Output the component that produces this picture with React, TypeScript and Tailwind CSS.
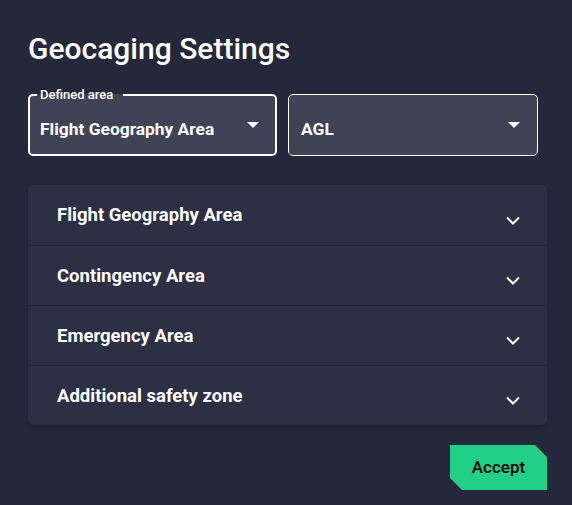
const areas = ['Flight Geography Area', 'Contingency Area', 'Emergency Area', 'Additional safety zone']

function Caret() {
    return (
        <svg width="12" height="6" viewBox="0 0 12 6" className="fill-white">
            <path d="M0 0h12L6 6z" />
        </svg>
    )
}

function Chevron() {
    return (
        <svg width="14" height="9" viewBox="0 0 14 9" fill="none" stroke="white" strokeWidth={2}>
            <path d="M1 1.5l6 6 6-6" />
        </svg>
    )
}

export default function App() {
    return (
        <div className="min-h-[505px] w-[572px] bg-[#25273b] pl-[28px] pr-[25px] pt-[31px] font-['Roboto',sans-serif] text-white">
            <h1 className="text-[30px] font-medium leading-[36px]">Geocaging Settings</h1>

            <div className="mt-[22px] flex h-[67px] items-end gap-[11px]">
                <fieldset className="h-[67px] w-[249px] rounded-[5px] border-2 border-white bg-[#404356] px-0">
                    <legend className="ml-[7px] pl-[3px] pr-[10px] text-[13px] font-medium leading-[12px]">
                        Defined area
                    </legend>
                    <div className="flex h-[53px] items-center justify-between pl-[10px] pr-[16px]">
                        <span className="pt-[3px] text-[17.4px] font-bold">Flight Geography Area</span>
                        <span className="pb-[5px]">
                            <Caret />
                        </span>
                    </div>
                </fieldset>
                <div className="flex h-[62px] w-[250px] items-center justify-between rounded-[5px] border border-white bg-[#404356] pl-[12px] pr-[17px]">
                    <span className="pt-[8px] text-[17.4px] font-bold">AGL</span>
                    <Caret />
                </div>
            </div>

            <div className="mt-[29px] overflow-hidden rounded-[5px] bg-[#2d2f44] shadow-[0_2px_4px_rgba(0,0,0,0.2)]">
                {areas.map((a, i) => (
                    <div
                        key={a}
                        className={
                            'flex h-[60px] items-center justify-between pl-[29px] pr-[27px] ' +
                            (i > 0 ? 'border-t border-[#26283a]' : '')
                        }
                    >
                        <span className="pt-[2px] text-[18.5px] font-bold">{a}</span>
                        <span className="pt-[10px]">
                            <Chevron />
                        </span>
                    </div>
                ))}
            </div>

            <div className="mt-[20px] flex justify-end">
                <button className="h-[45px] w-[97px] bg-[#21cf88] text-[17px] font-medium text-black shadow-[0_0_12px_rgba(0,0,0,0.25)] [clip-path:polygon(0_0,calc(100%_-_12px)_0,100%_12px,100%_100%,12px_100%,0_calc(100%_-_12px))]">
                    Accept
                </button>
            </div>
        </div>
    )
}
